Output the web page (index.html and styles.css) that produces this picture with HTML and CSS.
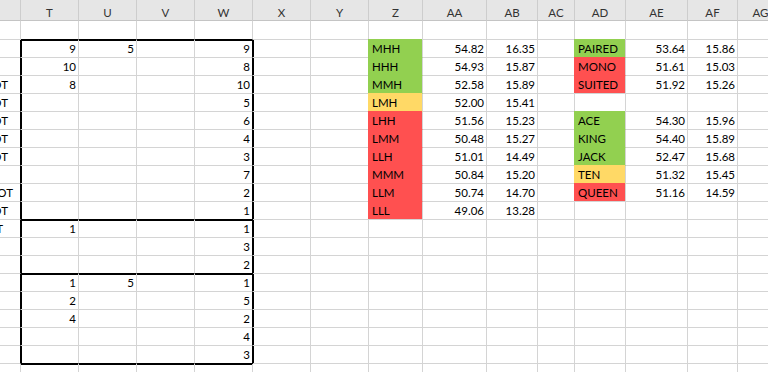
FILE: index.html
```html
<!DOCTYPE html>
<html>
<head>
<meta charset="utf-8">
<link rel="stylesheet" href="styles.css">
</head>
<body>
<div class="sheet">
  <div class="row hdr"><div></div><div>T</div><div>U</div><div>V</div><div>W</div><div>X</div><div>Y</div><div>Z</div><div>AA</div><div>AB</div><div>AC</div><div>AD</div><div>AE</div><div>AF</div><div>AG</div></div>
  <div class="row r1"><div></div><div class="bb"></div><div class="bb"></div><div class="bb"></div><div class="bb"></div><div></div><div></div><div></div><div></div><div></div><div></div><div></div><div></div><div></div><div></div></div>
  <div class="row"><div class="br"></div><div class="n sl st">9</div><div class="n st">5</div><div class="st"></div><div class="n st br">9</div><div class="sl"></div><div></div><div class="g">MHH</div><div class="n">54.82</div><div class="n">16.35</div><div></div><div class="g">PAIRED</div><div class="n">53.64</div><div class="n">15.86</div><div></div></div>
  <div class="row"><div class="br"></div><div class="n sl">10</div><div></div><div></div><div class="n br">8</div><div class="sl"></div><div></div><div class="g">HHH</div><div class="n">54.93</div><div class="n">15.87</div><div></div><div class="r">MONO</div><div class="n">51.61</div><div class="n">15.03</div><div></div></div>
  <div class="row"><div class="br s">POT</div><div class="n sl">8</div><div></div><div></div><div class="n br">10</div><div class="sl"></div><div></div><div class="g">MMH</div><div class="n">52.58</div><div class="n">15.89</div><div></div><div class="r gb">SUITED</div><div class="n">51.92</div><div class="n">15.26</div><div></div></div>
  <div class="row"><div class="br s">POT</div><div class="sl"></div><div></div><div></div><div class="n br">5</div><div class="sl"></div><div></div><div class="y">LMH</div><div class="n">52.00</div><div class="n">15.41</div><div></div><div></div><div></div><div></div><div></div></div>
  <div class="row"><div class="br s">POT</div><div class="sl"></div><div></div><div></div><div class="n br">6</div><div class="sl"></div><div></div><div class="r">LHH</div><div class="n">51.56</div><div class="n">15.23</div><div></div><div class="g">ACE</div><div class="n">54.30</div><div class="n">15.96</div><div></div></div>
  <div class="row"><div class="br s">POT</div><div class="sl"></div><div></div><div></div><div class="n br">4</div><div class="sl"></div><div></div><div class="r">LMM</div><div class="n">50.48</div><div class="n">15.27</div><div></div><div class="g">KING</div><div class="n">54.40</div><div class="n">15.89</div><div></div></div>
  <div class="row"><div class="br s">POT</div><div class="sl"></div><div></div><div></div><div class="n br">3</div><div class="sl"></div><div></div><div class="r">LLH</div><div class="n">51.01</div><div class="n">14.49</div><div></div><div class="g">JACK</div><div class="n">52.47</div><div class="n">15.68</div><div></div></div>
  <div class="row"><div class="br"></div><div class="sl"></div><div></div><div></div><div class="n br">7</div><div class="sl"></div><div></div><div class="r">MMM</div><div class="n">50.84</div><div class="n">15.20</div><div></div><div class="y">TEN</div><div class="n">51.32</div><div class="n">15.45</div><div></div></div>
  <div class="row"><div class="br s s7">POT</div><div class="sl"></div><div></div><div></div><div class="n br">2</div><div class="sl"></div><div></div><div class="r">LLM</div><div class="n">50.74</div><div class="n">14.70</div><div></div><div class="r gb">QUEEN</div><div class="n">51.16</div><div class="n">14.59</div><div></div></div>
  <div class="row"><div class="br s">POT</div><div class="sl bb"></div><div class="bb"></div><div class="bb"></div><div class="n br bb">1</div><div class="sl"></div><div></div><div class="r gb">LLL</div><div class="n">49.06</div><div class="n">13.28</div><div></div><div></div><div></div><div></div><div></div></div>
  <div class="row"><div class="br s s17">POT</div><div class="n sl st">1</div><div class="st"></div><div class="st"></div><div class="n st br">1</div><div class="sl"></div><div></div><div></div><div></div><div></div><div></div><div></div><div></div><div></div><div></div></div>
  <div class="row"><div class="br"></div><div class="sl"></div><div></div><div></div><div class="n br">3</div><div class="sl"></div><div></div><div></div><div></div><div></div><div></div><div></div><div></div><div></div><div></div></div>
  <div class="row"><div class="br"></div><div class="sl bb"></div><div class="bb"></div><div class="bb"></div><div class="n br bb">2</div><div class="sl"></div><div></div><div></div><div></div><div></div><div></div><div></div><div></div><div></div><div></div></div>
  <div class="row"><div class="br"></div><div class="n sl st">1</div><div class="n st">5</div><div class="st"></div><div class="n st br">1</div><div class="sl"></div><div></div><div></div><div></div><div></div><div></div><div></div><div></div><div></div><div></div></div>
  <div class="row"><div class="br"></div><div class="n sl">2</div><div></div><div></div><div class="n br">5</div><div class="sl"></div><div></div><div></div><div></div><div></div><div></div><div></div><div></div><div></div><div></div></div>
  <div class="row"><div class="br"></div><div class="n sl">4</div><div></div><div></div><div class="n br">2</div><div class="sl"></div><div></div><div></div><div></div><div></div><div></div><div></div><div></div><div></div><div></div></div>
  <div class="row"><div class="br"></div><div class="sl"></div><div></div><div></div><div class="n br">4</div><div class="sl"></div><div></div><div></div><div></div><div></div><div></div><div></div><div></div><div></div><div></div></div>
  <div class="row"><div class="br"></div><div class="sl bb"></div><div class="bb"></div><div class="bb"></div><div class="n br bb">3</div><div class="sl"></div><div></div><div></div><div></div><div></div><div></div><div></div><div></div><div></div><div></div></div>
  <div class="row"><div></div><div class="st"></div><div class="st"></div><div class="st"></div><div class="st"></div><div></div><div></div><div></div><div></div><div></div><div></div><div></div><div></div><div></div><div></div></div>
</div>
</body>
</html>
```

FILE: styles.css
```css
* { box-sizing: border-box; margin: 0; padding: 0; }

html, body {
  width: 768px;
  height: 372px;
  overflow: hidden;
  background: #fff;
}

body {
  margin: 0;
  font-family: Lato, "Liberation Sans", sans-serif;
  font-size: 11.5px;
  color: #000;
}

.sheet {
  display: flex;
  flex-direction: column;
  width: 784px;
}

.row {
  display: grid;
  grid-template-columns: 21px 58px 58px 58px 58px 58px 58px 54px 64px 51px 37px 51px 62px 50px 46px;
  height: 18px;
}

.hdr { height: 21px; }
.r1 { height: 19px; }

.row > div {
  display: flex;
  align-items: center;
  padding: 0 3px;
  line-height: 17px;
  white-space: nowrap;
  overflow: hidden;
  border-right: 1px solid #d4d4d4;
  border-bottom: 1px solid #d4d4d4;
  box-shadow: inset var(--l, 0px) 0 #000, inset 0 var(--t, 0px) #000;
}

.hdr > div {
  background: #e6e6e6;
  justify-content: center;
  padding-top: 4px;
  color: #333;
  border-right-color: #cdcdcd;
  border-bottom-color: #c4c4c4;
}

.row > .n { justify-content: flex-end; padding-right: 2px; }
.row > .s { justify-content: flex-end; padding: 0 12px 0 0; }
.row > .s7 { padding-right: 7px; }
.row > .s17 { padding-right: 17px; }

.row > .bb { border-bottom-color: #000; }
.row > .br { border-right-color: #000; }
.sl { --l: 1px; }
.st { --t: 1px; }

.row > .g { background: #92d050; border-bottom-color: #92d050; box-shadow: -1px -1px 0 #92d050; }
.row > .y { background: #ffd966; border-bottom-color: #ffd966; box-shadow: -1px -1px 0 #ffd966; }
.row > .r { background: #ff5050; border-bottom-color: #ff5050; box-shadow: -1px -1px 0 #ff5050; }
.row > .gb { border-bottom-color: #d4d4d4; }
```
